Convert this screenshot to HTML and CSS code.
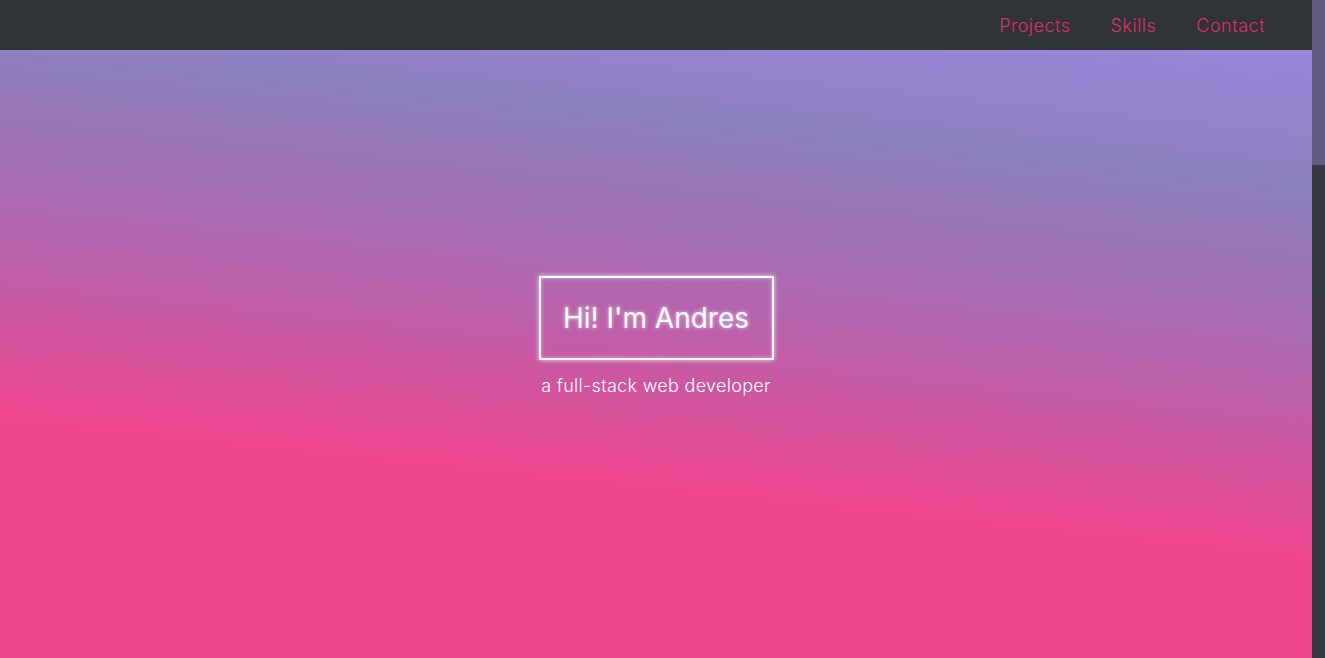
FILE: index.html
```html
<!DOCTYPE html>
<html lang="en">
<head>
<meta charset="utf-8">
<title>Andres</title>
<link rel="stylesheet" href="styles.css">
</head>
<body>
<div class="page">
  <header class="navbar">
    <nav class="nav-links">
      <a href="#projects" class="nav-link">Projects</a>
      <a href="#skills" class="nav-link">Skills</a>
      <a href="#contact" class="nav-link">Contact</a>
    </nav>
  </header>
  <main>
    <section class="hero">
      <div class="hero-inner">
        <h1 class="hero-title">Hi! I'm Andres</h1>
        <p class="hero-sub">a full-stack web developer</p>
      </div>
    </section>
    <section id="projects" class="section"></section>
    <section id="skills" class="section"></section>
    <section id="contact" class="section section-last"></section>
  </main>
</div>
<div class="scrollbar" aria-hidden="true">
  <div class="scrollbar-thumb"></div>
</div>
</body>
</html>
```
FILE: styles.css
```css
html, body {
  margin: 0;
  padding: 0;
}
body {
  font-family: Inter, "Open Sans", sans-serif;
  background: #f04692;
  color: #fff;
  display: flex;
  align-items: flex-start;
}
.page {
  flex: 1;
  min-width: 0;
}
.scrollbar {
  width: 13px;
  height: 100vh;
  flex-shrink: 0;
  position: sticky;
  top: 0;
  background: #373a40;
}
.scrollbar-thumb {
  height: 165px;
  background: #625a7f;
}
.navbar {
  height: 50px;
  background: #303338;
  display: flex;
  justify-content: flex-end;
  align-items: center;
  padding-right: 47px;
}
.nav-links {
  display: flex;
  gap: 40px;
}
.nav-link {
  color: #dd326c;
  text-decoration: none;
  font-size: 18px;
  font-weight: 300;
  letter-spacing: 0.5px;
}
.hero {
  height: 608px;
  background: linear-gradient(186deg, #9b87dc 0%, #8c80bd 19%, #b266af 42%, #d0559f 55%, #f0468f 68%, #f04692 100%);
  display: flex;
  justify-content: center;
  padding-top: 226px;
  box-sizing: border-box;
}
.hero-inner {
  display: flex;
  flex-direction: column;
  align-items: center;
}
.hero-title {
  margin: 0;
  width: 235px;
  height: 84px;
  box-sizing: border-box;
  border: 2px solid #fff;
  box-shadow: 0 0 5px rgba(255,255,255,0.8), inset 0 0 4px rgba(255,255,255,0.5);
  display: flex;
  align-items: center;
  justify-content: center;
  font-size: 28px;
  font-weight: 400;
  text-shadow: 0 0 4px rgba(255,255,255,0.7);
}
.hero-sub {
  margin: 15px 0 0;
  font-size: 18px;
  font-weight: 300;
  letter-spacing: 0.3px;
}
.section {
  height: 620px;
  background: #f04692;
}
.section-last {
  height: 746px;
}
```
